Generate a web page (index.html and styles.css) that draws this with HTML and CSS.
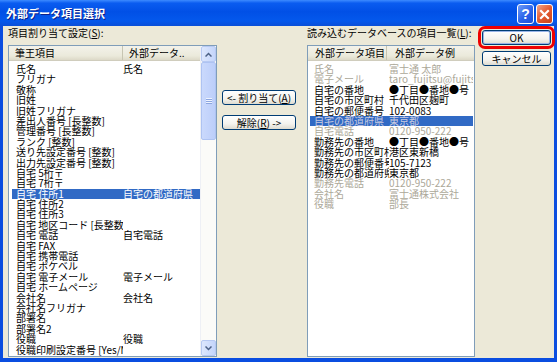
FILE: index.html
```html
<!DOCTYPE html>
<html lang="ja">
<head>
    <meta charset="UTF-8">
    <title>外部データ項目選択</title>
    <link rel="stylesheet" href="styles.css">
</head>
<body>
    <div class="window">
        <div class="titlebar">
            <span class="title">外部データ項目選択</span>
            <div class="caption-buttons">
                <span class="cap-btn help">?</span>
                <span class="cap-btn close">
                    <svg width="11" height="11" viewBox="0 0 11 11"><path d="M2 2 L9 9 M9 2 L2 9" stroke="#fff" stroke-width="2.2" stroke-linecap="square"/></svg>
                </span>
            </div>
        </div>

        <div class="client">
            <!-- left: 筆王 side -->
            <div class="panel left-panel">
                <div class="label">項目割り当て設定(<u>S</u>):</div>
                <div class="listbox">
                    <div class="list-cols">
                        <div class="list-head">
                            <span class="hcol c1">筆王項目</span>
                            <span class="hcol c2">外部データ..</span>
                        </div>
                        <div class="rows">
                            <div class="row"><span class="c1">氏名</span><span class="c2">氏名</span></div>
                            <div class="row"><span class="c1">フリガナ</span><span class="c2"></span></div>
                            <div class="row"><span class="c1">敬称</span><span class="c2"></span></div>
                            <div class="row"><span class="c1">旧姓</span><span class="c2"></span></div>
                            <div class="row"><span class="c1">旧姓フリガナ</span><span class="c2"></span></div>
                            <div class="row"><span class="c1">差出人番号 [長整数]</span><span class="c2"></span></div>
                            <div class="row"><span class="c1">管理番号 [長整数]</span><span class="c2"></span></div>
                            <div class="row"><span class="c1">ランク [整数]</span><span class="c2"></span></div>
                            <div class="row"><span class="c1">送り先設定番号 [整数]</span><span class="c2"></span></div>
                            <div class="row"><span class="c1">出力先設定番号 [整数]</span><span class="c2"></span></div>
                            <div class="row"><span class="c1">自宅 5桁〒</span><span class="c2"></span></div>
                            <div class="row"><span class="c1">自宅 7桁〒</span><span class="c2"></span></div>
                            <div class="row selected"><span class="c1">自宅 住所1</span><span class="c2">自宅の都道府県</span></div>
                            <div class="row"><span class="c1">自宅 住所2</span><span class="c2"></span></div>
                            <div class="row"><span class="c1">自宅 住所3</span><span class="c2"></span></div>
                            <div class="row"><span class="c1">自宅 地区コード [長整数]</span><span class="c2"></span></div>
                            <div class="row"><span class="c1">自宅 電話</span><span class="c2">自宅電話</span></div>
                            <div class="row"><span class="c1">自宅 FAX</span><span class="c2"></span></div>
                            <div class="row"><span class="c1">自宅 携帯電話</span><span class="c2"></span></div>
                            <div class="row"><span class="c1">自宅 ポケベル</span><span class="c2"></span></div>
                            <div class="row"><span class="c1">自宅 電子メール</span><span class="c2">電子メール</span></div>
                            <div class="row"><span class="c1">自宅 ホームページ</span><span class="c2"></span></div>
                            <div class="row"><span class="c1">会社名</span><span class="c2">会社名</span></div>
                            <div class="row"><span class="c1">会社名フリガナ</span><span class="c2"></span></div>
                            <div class="row"><span class="c1">部署名</span><span class="c2"></span></div>
                            <div class="row"><span class="c1">部署名2</span><span class="c2"></span></div>
                            <div class="row"><span class="c1">役職</span><span class="c2">役職</span></div>
                            <div class="row"><span class="c1">役職印刷設定番号 [Yes/No]</span><span class="c2"></span></div>
                        </div>
                    </div>
                    <div class="scrollbar">
                        <div class="sb-btn">
                            <svg width="7" height="5" viewBox="0 0 7 5"><path d="M0.5 4.5 L3.5 1.5 L6.5 4.5" fill="none" stroke="#4d6185" stroke-width="1.5"/></svg>
                        </div>
                        <div class="sb-thumb"><span class="grip"></span></div>
                        <div class="sb-track"></div>
                        <div class="sb-btn">
                            <svg width="7" height="5" viewBox="0 0 7 5"><path d="M0.5 0.5 L3.5 3.5 L6.5 0.5" fill="none" stroke="#4d6185" stroke-width="1.5"/></svg>
                        </div>
                    </div>
                </div>
            </div>

            <div class="middle">
                <button class="btn">&lt;- 割り当て(<u>A</u>)</button>
                <button class="btn">解除(<u>R</u>) -&gt;</button>
            </div>

            <!-- right: database side -->
            <div class="panel right-panel">
                <div class="label">読み込むデータベースの項目一覧(<u>L</u>):</div>
                <div class="listbox">
                    <div class="list-cols">
                        <div class="list-head">
                            <span class="hcol c1">外部データ項目</span>
                            <span class="hcol c2">外部データ例</span>
                        </div>
                        <div class="rows">
                            <div class="row used"><span class="c1">氏名</span><span class="c2">富士通 太郎</span></div>
                            <div class="row used"><span class="c1">電子メール</span><span class="c2">taro_fujitsu@fujitsu.com</span></div>
                            <div class="row"><span class="c1">自宅の番地</span><span class="c2">●丁目●番地●号</span></div>
                            <div class="row"><span class="c1">自宅の市区町村</span><span class="c2">千代田区麹町</span></div>
                            <div class="row"><span class="c1">自宅の郵便番号</span><span class="c2">102-0083</span></div>
                            <div class="row selected used"><span class="c1">自宅の都道府県</span><span class="c2">東京都</span></div>
                            <div class="row used"><span class="c1">自宅電話</span><span class="c2">0120-950-222</span></div>
                            <div class="row"><span class="c1">勤務先の番地</span><span class="c2">●丁目●番地●号</span></div>
                            <div class="row"><span class="c1">勤務先の市区町村</span><span class="c2">港区東新橋</span></div>
                            <div class="row"><span class="c1">勤務先の郵便番号</span><span class="c2">105-7123</span></div>
                            <div class="row"><span class="c1">勤務先の都道府県</span><span class="c2">東京都</span></div>
                            <div class="row used"><span class="c1">勤務先電話</span><span class="c2">0120-950-222</span></div>
                            <div class="row used"><span class="c1">会社名</span><span class="c2">富士通株式会社</span></div>
                            <div class="row used"><span class="c1">役職</span><span class="c2">部長</span></div>
                        </div>
                    </div>
                </div>
            </div>

            <div class="side-buttons">
                <button class="btn ok">OK</button>
                <button class="btn">キャンセル</button>
            </div>
        </div>
    </div>
</body>
</html>
```

FILE: styles.css
```css
body {
    margin: 0;
    font-family: "Noto Sans CJK JP", "Liberation Sans", sans-serif;
    font-size: 10px;
    color: #000;
    background: #fff;
}

.window {
    width: 557px;
    height: 362px;
    display: flex;
    flex-direction: column;
    background: #0a4de0;
    overflow: hidden;
}

/* Title bar */
.titlebar {
    height: 26px;
    flex: none;
    display: flex;
    align-items: center;
    justify-content: space-between;
    padding: 0 4px 0 6px;
    background: linear-gradient(to bottom, #3d8bff 0%, #0a5cf0 12%, #0150e6 45%, #0458ec 80%, #0a4fd8 100%);
}

.title {
    color: #fff;
    font-weight: bold;
    font-size: 11px;
    line-height: 14px;
    text-shadow: 1px 1px 0 #0a1f8a;
}

.caption-buttons {
    display: flex;
    gap: 2px;
    padding-top: 2px;
}

.cap-btn {
    width: 15px;
    height: 18px;
    border: 1px solid #fff;
    border-radius: 3px;
    display: flex;
    align-items: center;
    justify-content: center;
    color: #fff;
    font-family: "Liberation Sans", sans-serif;
    font-weight: bold;
    font-size: 14px;
}

.help {
    background: linear-gradient(135deg, #6f9cf7 0%, #2b63ea 55%, #1e4fd6 100%);
}

.close {
    background: linear-gradient(135deg, #f0a58a 0%, #e3592f 50%, #c9431c 100%);
}

/* Client area */
.client {
    flex: 1;
    margin: 0 3px 4px 3px;
    background: #ece9d8;
    display: flex;
    align-items: flex-start;
}

.panel {
    display: flex;
    flex-direction: column;
}

.left-panel {
    width: 209px;
    margin-left: 5px;
}

.right-panel {
    width: 168px;
}

.label {
    height: 14px;
    line-height: 14px;
    margin-bottom: 5px;
    white-space: nowrap;
}

.listbox {
    height: 312px;
    box-sizing: border-box;
    border: 1px solid #7f9db9;
    background: #fff;
    display: flex;
}

.list-cols {
    flex: 1;
    min-width: 0;
    display: flex;
    flex-direction: column;
}

.list-head {
    height: 15px;
    flex: none;
    display: flex;
    background: linear-gradient(to bottom, #f3f2ea 0%, #ebeadb 70%, #dcd9c8 100%);
    border-bottom: 1px solid #d0cdbd;
    box-sizing: border-box;
}

.hcol {
    line-height: 14px;
    white-space: nowrap;
    overflow: hidden;
    box-sizing: border-box;
}

.left-panel .hcol.c1 {
    width: 114px;
    padding-left: 6px;
    border-right: 1px solid #c7c5b2;
}

.left-panel .hcol.c2 {
    padding-left: 6px;
}

.right-panel .hcol.c1 {
    width: 79px;
    padding-left: 7px;
    border-right: 1px solid #c7c5b2;
}

.right-panel .hcol.c2 {
    padding-left: 8px;
}

.rows {
    padding-top: 3px;
}

.row {
    display: flex;
    height: 10.4px;
    line-height: 10.4px;
    font-size: 10px;
    white-space: nowrap;
}

.left-panel .row {
    margin: 0 0 0 3px;
}

.right-panel .row {
    margin: 0 1px 0 2px;
}

.row span {
    overflow-x: clip;
    overflow-y: visible;
    display: block;
    box-sizing: border-box;
}

.left-panel .row .c1 {
    width: 111px;
    flex: none;
    padding-left: 4px;
}

.right-panel .row .c1 {
    width: 79px;
    flex: none;
    padding-left: 4px;
}

.row .c2 {
    flex: 1;
    min-width: 0;
}

.row.used {
    color: #aca899;
}

.row.selected {
    background: #316ac5;
    color: #fff;
}

.row.selected.used {
    color: #c9cbe0;
}

/* Scrollbar */
.scrollbar {
    width: 16px;
    flex: none;
    display: flex;
    flex-direction: column;
    background: #fbfbf8;
    border-left: 1px solid #eef0f5;
    box-sizing: border-box;
}

.sb-btn {
    height: 16px;
    flex: none;
    box-sizing: border-box;
    border: 1px solid #b7c9f2;
    border-radius: 2px;
    background: linear-gradient(to right, #dde7fd, #c4d5fb);
    display: flex;
    align-items: center;
    justify-content: center;
}

.sb-thumb {
    height: 78px;
    flex: none;
    box-sizing: border-box;
    border: 1px solid #aec3f2;
    border-radius: 2px;
    background: linear-gradient(to right, #cad9fc, #bccefa);
    display: flex;
    align-items: center;
    justify-content: center;
}

.grip {
    width: 6px;
    height: 6px;
    background: repeating-linear-gradient(to bottom, #eef3fe 0, #eef3fe 1px, #8ca6e0 1px, #8ca6e0 2px);
}

.sb-track {
    flex: 1;
}

/* Buttons */
.btn {
    font-family: inherit;
    font-size: 10px;
    line-height: 12px;
    height: 15px;
    padding: 0;
    border: 1px solid #003c74;
    border-radius: 3px;
    background: linear-gradient(to bottom, #ffffff 0%, #f4f3ee 60%, #dedbd0 100%);
    color: #000;
    white-space: nowrap;
}

.middle {
    width: 90px;
    padding-top: 64px;
    display: flex;
    flex-direction: column;
    gap: 10px;
}

.middle .btn {
    width: 74px;
    margin-left: 5px;
}

.side-buttons {
    margin-left: 7px;
    padding-top: 4px;
    display: flex;
    flex-direction: column;
    gap: 6px;
}

.side-buttons .btn {
    width: 69px;
}

.btn.ok {
    outline: 3px solid #ee0000;
    outline-offset: 1px;
    box-shadow: inset 0 0 0 1px #98b4e8;
}
```
